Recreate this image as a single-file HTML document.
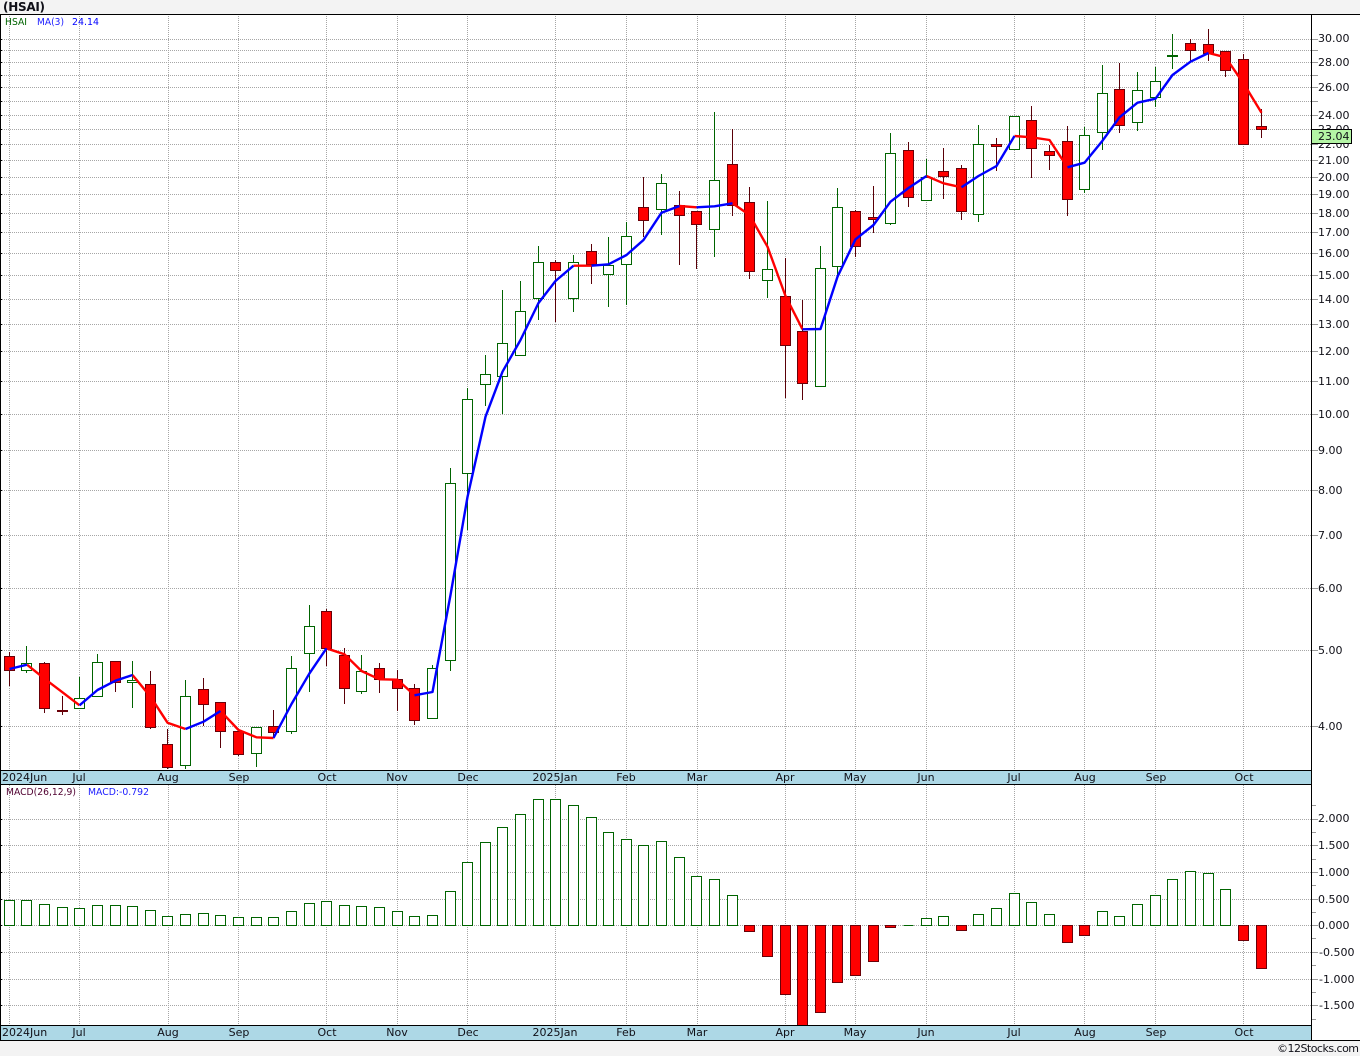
<!DOCTYPE html>
<html><head><meta charset="utf-8"><title>HSAI</title>
<style>
html,body{margin:0;padding:0;background:#f3f3f3}
svg{display:block}
text{font-family:"DejaVu Sans","Liberation Sans",sans-serif;font-size:11px;fill:#101018}
.m{text-anchor:middle}
.g{stroke:#a6a6a6;stroke-width:1;stroke-dasharray:1 1;fill:none}
</style></head><body>
<svg width="1360" height="1056" viewBox="0 0 1360 1056" xmlns="http://www.w3.org/2000/svg">
<rect width="1360" height="1056" fill="#f3f3f3"/>
<rect x="0" y="14" width="1360" height="1027" fill="#fff"/>
<rect x="0" y="770" width="1311" height="14" fill="#add8e6"/>
<rect x="0" y="1025" width="1311" height="15" fill="#add8e6"/>
<g shape-rendering="crispEdges">
<path class="g" d="M0 39.500H1311M0 50.500H1311M0 62.500H1311M0 75.500H1311M0 87.500H1311M0 101.500H1311M0 115.500H1311M0 129.500H1311M0 144.500H1311M0 160.500H1311M0 177.500H1311M0 194.500H1311M0 213.500H1311M0 232.500H1311M0 253.500H1311M0 275.500H1311M0 299.500H1311M0 324.500H1311M0 351.500H1311M0 381.500H1311M0 414.500H1311M0 450.500H1311M0 490.500H1311M0 535.500H1311M0 588.500H1311M0 650.500H1311M0 726.500H1311"/>
<path class="g" d="M0 819.500H1311M0 845.500H1311M0 872.500H1311M0 899.500H1311M0 925.500H1311M0 952.500H1311M0 979.500H1311M0 1005.500H1311"/>
<path class="g" d="M9.500 14V770M79.500 14V770M168.500 14V770M238.500 14V770M326.500 14V770M397.500 14V770M467.500 14V770M555.500 14V770M626.500 14V770M697.500 14V770M785.500 14V770M855.500 14V770M926.500 14V770M1014.500 14V770M1084.500 14V770M1155.500 14V770M1243.500 14V770"/>
<path class="g" d="M9.500 785V1025M79.500 785V1025M168.500 785V1025M238.500 785V1025M326.500 785V1025M397.500 785V1025M467.500 785V1025M555.500 785V1025M626.500 785V1025M697.500 785V1025M785.500 785V1025M855.500 785V1025M926.500 785V1025M1014.500 785V1025M1084.500 785V1025M1155.500 785V1025M1243.500 785V1025"/>
<!-- axis ticks -->
<path stroke="#999" fill="none" d="M1312 39.500h6M1312 50.500h6M1312 62.500h6M1312 75.500h6M1312 87.500h6M1312 101.500h6M1312 115.500h6M1312 129.500h6M1312 144.500h6M1312 160.500h6M1312 177.500h6M1312 194.500h6M1312 213.500h6M1312 232.500h6M1312 253.500h6M1312 275.500h6M1312 299.500h6M1312 324.500h6M1312 351.500h6M1312 381.500h6M1312 414.500h6M1312 450.500h6M1312 490.500h6M1312 535.500h6M1312 588.500h6M1312 650.500h6M1312 726.500h6M1312 819.500h6M1312 845.500h6M1312 872.500h6M1312 899.500h6M1312 925.500h6M1312 952.500h6M1312 979.500h6M1312 1005.500h6M1312 805.500h4M1312 832.500h4M1312 859.500h4M1312 885.500h4M1312 912.500h4M1312 938.500h4M1312 965.500h4M1312 992.500h4M1312 1019.500h4"/>
<path stroke="#000" fill="none" d="M0 39.500h2M0 50.500h2M0 62.500h2M0 75.500h2M0 87.500h2M0 101.500h2M0 115.500h2M0 129.500h2M0 144.500h2M0 160.500h2M0 177.500h2M0 194.500h2M0 213.500h2M0 232.500h2M0 253.500h2M0 275.500h2M0 299.500h2M0 324.500h2M0 351.500h2M0 381.500h2M0 414.500h2M0 450.500h2M0 490.500h2M0 535.500h2M0 588.500h2M0 650.500h2M0 726.500h2M0 819.500h2M0 845.500h2M0 872.500h2M0 899.500h2M0 925.500h2M0 952.500h2M0 979.500h2M0 1005.500h2"/>
<!-- wicks up -->
<path stroke="#006400" fill="none" d="M26.500 646V673M79.500 677V709M97.500 654V697M132.500 661V708M185.500 680V769M256.500 727V767M291.500 656V734M309.500 605V692M361.500 655V694M432.500 665V718M450.500 468V671M467.500 388V530M485.500 355V406M502.500 290V414M520.500 281V355M538.500 246V320M573.500 255V312M608.500 237V307M626.500 222V305M661.500 174V235M714.500 112V257M767.500 201V298M820.500 246V387M837.500 188V277M890.500 133V225M926.500 159V201M978.500 125V222M1014.500 116V150M1084.500 127V193M1102.500 65V150M1137.500 72V131M1155.500 67V107M1172.500 34V69"/>
<!-- wicks down -->
<path stroke="#5a0008" fill="none" d="M9.500 652V686M44.500 662V713M62.500 696V715M115.500 661V692M150.500 671V729M167.500 729V769M203.500 678V726M220.500 702V748M238.500 731V756M273.500 710V737M326.500 609V666M344.500 648V704M379.500 663V693M397.500 670V711M414.500 684V725M555.500 260V322M591.500 244V284M643.500 177V237M679.500 191V265M696.500 211V269M732.500 129V216M749.500 187V279M785.500 258V398M802.500 300V400M855.500 210V257M873.500 186V233M908.500 142V207M943.500 148V199M961.500 165V220M996.500 138V171M1031.500 106V178M1049.500 145V170M1067.500 126V216M1119.500 63V133M1190.500 39V62M1208.500 29V61M1225.500 51V77M1243.500 54V144M1261.500 109V138"/>
<!-- up bodies -->
<path fill="#fff" stroke="#006400" d="M21.500 663.500h10v7h-10zM74.500 698.500h10v10h-10zM92.500 662.500h10v34h-10zM127.500 680.500h10v2h-10zM180.500 696.500h10v69h-10zM251.500 727.500h10v26h-10zM286.500 668.500h10v63h-10zM304.500 626.500h10v27h-10zM356.500 671.500h10v20h-10zM427.500 668.500h10v50h-10zM445.500 483.500h10v177h-10zM462.500 399.500h10v74h-10zM480.500 374.500h10v10h-10zM497.500 343.500h10v33h-10zM515.500 311.500h10v44h-10zM533.500 262.500h10v36h-10zM568.500 262.500h10v36h-10zM603.500 265.500h10v9h-10zM621.500 236.500h10v28h-10zM656.500 183.500h10v26h-10zM709.500 180.500h10v49h-10zM762.500 269.500h10v11h-10zM815.500 268.500h10v118h-10zM832.500 207.500h10v59h-10zM885.500 153.500h10v70h-10zM921.500 177.500h10v23h-10zM973.500 144.500h10v70h-10zM1009.500 116.500h10v33h-10zM1079.500 135.500h10v54h-10zM1097.500 93.500h10v39h-10zM1132.500 90.500h10v32h-10zM1150.500 81.500h10v16h-10zM1167.500 55.500h10v1h-10z"/>
<!-- down bodies -->
<path fill="#f00" stroke="#6a0008" d="M4.500 656.500h10v14h-10zM39.500 663.500h10v45h-10zM57.500 710.500h10v1h-10zM110.500 661.500h10v21h-10zM145.500 684.500h10v43h-10zM162.500 744.500h10v23h-10zM198.500 689.500h10v15h-10zM215.500 702.500h10v29h-10zM233.500 731.500h10v23h-10zM268.500 726.500h10v6h-10zM321.500 611.500h10v37h-10zM339.500 655.500h10v33h-10zM374.500 668.500h10v11h-10zM392.500 679.500h10v9h-10zM409.500 688.500h10v32h-10zM550.500 262.500h10v8h-10zM586.500 251.500h10v13h-10zM638.500 207.500h10v13h-10zM674.500 205.500h10v10h-10zM691.500 211.500h10v13h-10zM727.500 164.500h10v41h-10zM744.500 202.500h10v69h-10zM780.500 296.500h10v49h-10zM797.500 331.500h10v52h-10zM850.500 211.500h10v35h-10zM868.500 217.500h10v2h-10zM903.500 150.500h10v47h-10zM938.500 171.500h10v5h-10zM956.500 168.500h10v43h-10zM991.500 144.500h10v2h-10zM1026.500 120.500h10v28h-10zM1044.500 151.500h10v4h-10zM1062.500 141.500h10v58h-10zM1114.500 89.500h10v36h-10zM1185.500 43.500h10v7h-10zM1203.500 44.500h10v9h-10zM1220.500 51.500h10v19h-10zM1238.500 59.500h10v85h-10zM1256.500 126.500h10v3h-10z"/>
<!-- MACD up -->
<path fill="#fff" stroke="#006400" d="M4.500 900.500h10v25h-10zM21.500 900.500h10v25h-10zM39.500 904.500h10v21h-10zM57.500 907.500h10v18h-10zM74.500 908.500h10v17h-10zM92.500 905.500h10v20h-10zM110.500 905.500h10v20h-10zM127.500 906.500h10v19h-10zM145.500 910.500h10v15h-10zM162.500 916.500h10v9h-10zM180.500 914.500h10v11h-10zM198.500 913.500h10v12h-10zM215.500 915.500h10v10h-10zM233.500 917.500h10v8h-10zM251.500 917.500h10v8h-10zM268.500 917.500h10v8h-10zM286.500 911.500h10v14h-10zM304.500 903.500h10v22h-10zM321.500 901.500h10v24h-10zM339.500 905.500h10v20h-10zM356.500 906.500h10v19h-10zM374.500 907.500h10v18h-10zM392.500 911.500h10v14h-10zM409.500 916.500h10v9h-10zM427.500 915.500h10v10h-10zM445.500 891.500h10v34h-10zM462.500 862.500h10v63h-10zM480.500 842.500h10v83h-10zM497.500 827.500h10v98h-10zM515.500 814.500h10v111h-10zM533.500 799.500h10v126h-10zM550.500 799.500h10v126h-10zM568.500 805.500h10v120h-10zM586.500 817.500h10v108h-10zM603.500 832.500h10v93h-10zM621.500 839.500h10v86h-10zM638.500 845.500h10v80h-10zM656.500 841.500h10v84h-10zM674.500 857.500h10v68h-10zM691.500 876.500h10v49h-10zM709.500 879.500h10v46h-10zM727.500 895.500h10v30h-10zM921.500 918.500h10v7h-10zM938.500 916.500h10v9h-10zM973.500 914.500h10v11h-10zM991.500 908.500h10v17h-10zM1009.500 893.500h10v32h-10zM1026.500 902.500h10v23h-10zM1044.500 914.500h10v11h-10zM1097.500 911.500h10v14h-10zM1114.500 916.500h10v9h-10zM1132.500 904.500h10v21h-10zM1150.500 895.500h10v30h-10zM1167.500 879.500h10v46h-10zM1185.500 871.500h10v54h-10zM1203.500 873.500h10v52h-10zM1220.500 889.500h10v36h-10z"/>
<path stroke="#006400" fill="none" d="M903.500 925.500h10"/>
<!-- MACD down -->
<path fill="#f00" stroke="#6a0008" d="M744.500 925.500h10v6h-10zM762.500 925.500h10v31h-10zM780.500 925.500h10v69h-10zM797.500 925.500h10v100h-10zM815.500 925.500h10v87h-10zM832.500 925.500h10v57h-10zM850.500 925.500h10v50h-10zM868.500 925.500h10v36h-10zM885.500 925.500h10v2h-10zM956.500 925.500h10v5h-10zM1062.500 925.500h10v17h-10zM1079.500 925.500h10v10h-10zM1238.500 925.500h10v15h-10zM1256.500 925.500h10v43h-10z"/>
</g>
<!-- moving average -->
<g fill="none" stroke-width="2.4" stroke-linejoin="round" stroke-linecap="butt">
<g stroke="#f00">
<polyline points="27,664.700 44.500,678.700 62.500,692.300 79.500,705.300"/>
<polyline points="132.500,675 150.500,696.700 167.500,722.700 185.500,729"/>
<polyline points="220.500,711 238.500,730 256.500,737.300 273.500,738"/>
<polyline points="326.500,648.300 344.500,654.300 361.500,671 379.500,679.300 397.500,679.700 414.500,695.300"/>
<polyline points="573.500,265.700 591.500,265.700"/>
<polyline points="679.500,206 696.500,207.300"/>
<polyline points="732.500,203.300 749.500,215 767.500,246.700 785.500,296 802.500,329.300"/>
<polyline points="926.500,176 943.500,183.300 961.500,187.300"/>
<polyline points="1014.500,136 1031.500,137.300 1049.500,140 1067.500,167.300"/>
<polyline points="1208.500,53 1225.500,57.300 1243.500,83.300 1261.500,112.700"/>
</g>
<g stroke="#00f">
<polyline points="9.500,669 27,664.700"/>
<polyline points="79.500,705.300 97.500,690 115.500,680.700 132.500,675"/>
<polyline points="185.500,729 203.500,721.700 220.500,711"/>
<polyline points="273.500,738 291.500,704 309.500,673.300 326.500,648.300"/>
<polyline points="414.500,695.300 432.500,692 450.500,595 467.500,497 485.500,416.700 502.500,371.700 520.500,340 538.500,303 555.500,281 573.500,265.700"/>
<polyline points="591.500,265.700 608.500,264.300 626.500,255 643.500,240 661.500,212.700 679.500,206"/>
<polyline points="696.500,207.300 714.500,206.300 732.500,203.300"/>
<polyline points="802.500,329.300 820.500,329 837.500,276.700 855.500,239.300 873.500,225 890.500,201.700 908.500,188 926.500,176"/>
<polyline points="961.500,187.300 978.500,176 996.500,166 1014.500,136"/>
<polyline points="1067.500,167.300 1084.500,162.700 1102.500,140.700 1119.500,117.300 1137.500,102.700 1155.500,98.700 1172.500,75 1190.500,61.700 1208.500,53"/>
</g>
</g>
<g shape-rendering="crispEdges">
<path stroke="#000" fill="none" d="M0 14.500H1360M0.500 14V1041M1311.500 14V1041M0 770.500H1311M0 784.500H1311M0 1025.500H1311M0 1040.500H1360"/>
<rect x="1311.500" y="129.500" width="40" height="14" fill="#b4f5a5" stroke="#000"/>
</g>
<text x="3" y="11" style="font-weight:bold;font-size:12px" textLength="42">(HSAI)</text>
<text x="5" y="25" style="font-size:10px;fill:#006400" textLength="22" lengthAdjust="spacingAndGlyphs">HSAI</text>
<text x="37" y="25" style="font-size:10px;fill:#2020ff" textLength="27" lengthAdjust="spacingAndGlyphs">MA(3)</text>
<text x="72" y="25" style="font-size:10px;fill:#0000ff" textLength="27" lengthAdjust="spacingAndGlyphs">24.14</text>
<text x="6" y="795" style="font-size:10px;fill:#500030" textLength="70" lengthAdjust="spacingAndGlyphs">MACD(26,12,9)</text>
<text x="88" y="795" style="font-size:10px;fill:#2020ff" textLength="61" lengthAdjust="spacingAndGlyphs">MACD:-0.792</text>
<text x="1318" y="42">30.00</text><text x="1318" y="66">28.00</text><text x="1318" y="91">26.00</text><text x="1318" y="119">24.00</text><text x="1318" y="133">23.00</text><text x="1318" y="148">22.00</text><text x="1318" y="164">21.00</text><text x="1318" y="181">20.00</text><text x="1318" y="198">19.00</text><text x="1318" y="217">18.00</text><text x="1318" y="236">17.00</text><text x="1318" y="257">16.00</text><text x="1318" y="279">15.00</text><text x="1318" y="303">14.00</text><text x="1318" y="328">13.00</text><text x="1318" y="355">12.00</text><text x="1318" y="385">11.00</text><text x="1318" y="418">10.00</text><text x="1318" y="454">9.00</text><text x="1318" y="494">8.00</text><text x="1318" y="539">7.00</text><text x="1318" y="592">6.00</text><text x="1318" y="654">5.00</text><text x="1318" y="730">4.00</text>
<rect x="1312" y="130" width="39" height="13" fill="#b4f5a5"/>
<text x="1318" y="140">23.04</text>
<text x="1318" y="822">2.000</text><text x="1318" y="849">1.500</text><text x="1318" y="876">1.000</text><text x="1318" y="903">0.500</text><text x="1318" y="929">0.000</text><text x="1319" y="956">-0.500</text><text x="1319" y="983">-1.000</text><text x="1319" y="1009">-1.500</text>
<text x="2" y="781">2024Jun</text><text class="m" x="79" y="781">Jul</text><text class="m" x="168" y="781">Aug</text><text class="m" x="239" y="781">Sep</text><text class="m" x="327" y="781">Oct</text><text class="m" x="397" y="781">Nov</text><text class="m" x="468" y="781">Dec</text><text class="m" x="555" y="781">2025Jan</text><text class="m" x="626" y="781">Feb</text><text class="m" x="697" y="781">Mar</text><text class="m" x="785" y="781">Apr</text><text class="m" x="855" y="781">May</text><text class="m" x="926" y="781">Jun</text><text class="m" x="1014" y="781">Jul</text><text class="m" x="1085" y="781">Aug</text><text class="m" x="1156" y="781">Sep</text><text class="m" x="1244" y="781">Oct</text>
<text x="2" y="1036">2024Jun</text><text class="m" x="79" y="1036">Jul</text><text class="m" x="168" y="1036">Aug</text><text class="m" x="239" y="1036">Sep</text><text class="m" x="327" y="1036">Oct</text><text class="m" x="397" y="1036">Nov</text><text class="m" x="468" y="1036">Dec</text><text class="m" x="555" y="1036">2025Jan</text><text class="m" x="626" y="1036">Feb</text><text class="m" x="697" y="1036">Mar</text><text class="m" x="785" y="1036">Apr</text><text class="m" x="855" y="1036">May</text><text class="m" x="926" y="1036">Jun</text><text class="m" x="1014" y="1036">Jul</text><text class="m" x="1085" y="1036">Aug</text><text class="m" x="1156" y="1036">Sep</text><text class="m" x="1244" y="1036">Oct</text>
<text x="1277" y="1052" textLength="82">©12Stocks.com</text>
</svg>
</body></html>
